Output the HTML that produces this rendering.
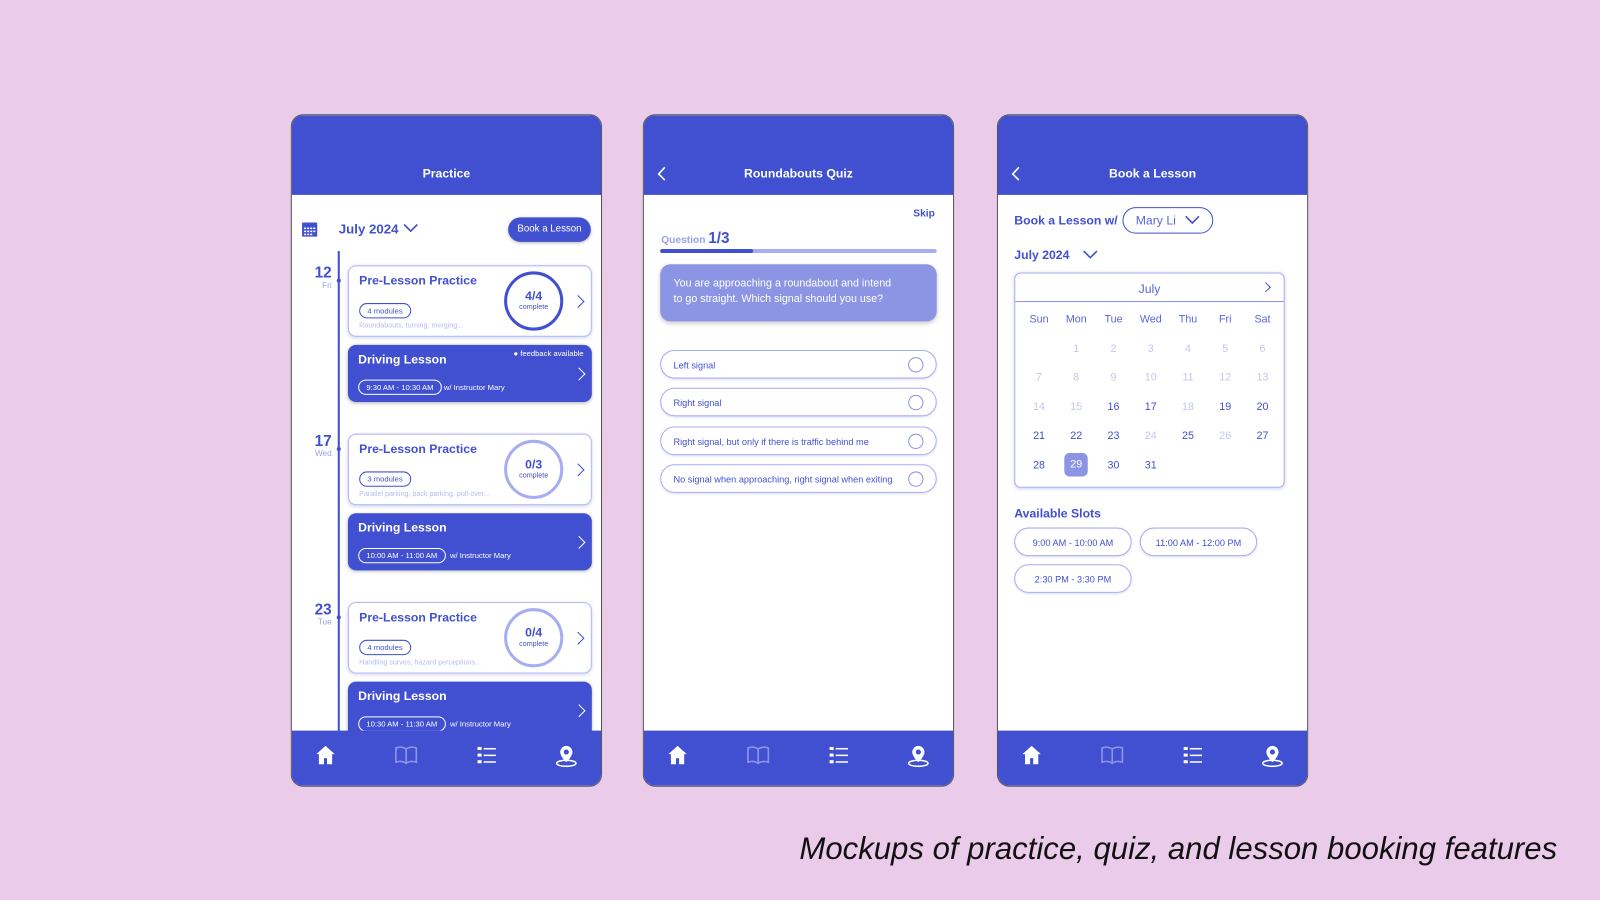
<!DOCTYPE html>
<html><head><meta charset="utf-8"><style>
*{margin:0;padding:0;box-sizing:border-box}
body{width:1600px;height:900px;background:#ebcbea;font-family:"Liberation Sans",sans-serif;overflow:hidden;color:#4150d0}
#w{position:absolute;left:0;top:0;width:1568px;height:882px;transform:scale(1.020408);transform-origin:0 0}
.ph{position:absolute;top:112px;width:305px;height:659px;background:#fff;border:1px solid #555;border-radius:12px;overflow:hidden}
.hd{position:absolute;left:0;top:0;width:100%;height:78px;background:#4150d0;color:#fff;font-weight:bold;font-size:12px;text-align:center;padding-top:50px}
.nav{position:absolute;left:0;bottom:0;width:100%;height:54px;background:#4150d0}
.nav svg{position:absolute;top:14px}
.a{position:absolute}
.card{position:absolute;left:55px;width:239px;border-radius:8px}
.pc{height:70px;border:1px solid #b5bbef;background:#fff;box-shadow:0 1px 3px rgba(65,80,208,.25)}
.dl{height:56px;background:#4150d0;color:#fff;box-shadow:0 1px 3px rgba(0,0,0,.25)}
.t{position:absolute;left:10px;top:7px;font-size:12px;font-weight:bold}
.pill{position:absolute;left:10px;border:1px solid;border-radius:8px;font-size:7.5px;padding:2px 7px;white-space:nowrap}
.sub{position:absolute;left:10px;top:55px;font-size:7px;color:#b5bbef;white-space:nowrap}
.circ{position:absolute;left:152px;top:5px;width:58px;height:58px;border-radius:50%;border:3px solid #4150d0;text-align:center;padding-top:16px;font-size:12px;font-weight:bold;line-height:11px}
.circ small{display:block;font-size:7px;font-weight:normal}
.chev{position:absolute;right:8px;width:9px;height:9px;border-right:1.6px solid;border-top:1.6px solid;transform:rotate(45deg)}
.date{position:absolute;left:6px;width:33px;text-align:right;font-size:15px;font-weight:bold;line-height:14px}
.date small{display:block;font-size:8px;font-weight:normal;color:#9aa0e6;line-height:10px}
.dot{position:absolute;left:44px;width:4px;height:4px;border-radius:50%;background:#4150d0}
.opt{position:absolute;left:16px;width:271px;height:28px;border:1px solid #a7aef0;border-radius:14px;font-size:9px;padding:9px 0 0 12px;box-shadow:0 1px 2px rgba(65,80,208,.2)}
.opt i{position:absolute;right:12px;top:6px;width:15px;height:15px;border:1px solid #8c95e3;border-radius:50%}
.cal td{width:36.5px;text-align:center;font-size:10.5px;height:28.5px}
.slot{position:absolute;width:115px;height:28px;border:1px solid #a7aef0;border-radius:14px;font-size:9px;text-align:center;padding-top:9px;box-shadow:0 1px 2px rgba(65,80,208,.2)}
</style></head><body><div id="w">

<!-- PHONE 1 -->
<div class="ph" style="left:285px">
<div class="hd">Practice</div>
<svg class="a" style="left:10px;top:105px" width="15" height="14" viewBox="0 0 15 14"><rect x="0" y="0" width="15" height="14" rx="1" fill="#4150d0"/><g fill="#fff"><rect x="2" y="5" width="2" height="1.5"/><rect x="5" y="5" width="2" height="1.5"/><rect x="8" y="5" width="2" height="1.5"/><rect x="11" y="5" width="2" height="1.5"/><rect x="2" y="8" width="2" height="1.5"/><rect x="5" y="8" width="2" height="1.5"/><rect x="8" y="8" width="2" height="1.5"/><rect x="11" y="8" width="2" height="1.5"/><rect x="2" y="11" width="2" height="1.5"/><rect x="5" y="11" width="2" height="1.5"/><rect x="8" y="11" width="2" height="1.5"/></g></svg>
<div class="a" style="left:46px;top:104px;font-size:13px;font-weight:bold">July 2024</div>
<svg class="a" style="left:109px;top:106px" width="15" height="9"><path d="M1 1l6.5 6.5L14 1" stroke="#4150d0" stroke-width="1.6" fill="none"/></svg>
<div class="a" style="left:212px;top:100px;width:81px;height:24px;background:#4150d0;color:#fff;border-radius:12px;font-size:9.5px;text-align:center;padding-top:6px;box-shadow:0 1px 3px rgba(0,0,0,.3)">Book a Lesson</div>
<div class="a" style="left:45px;top:133px;width:1.5px;height:480px;background:#4150d0"></div>

<div class="date" style="top:148px">12<small>Fri</small></div><div class="dot" style="top:160px"></div>
<div class="card pc" style="top:147px"><div class="t">Pre-Lesson Practice</div><div class="pill" style="top:36px">4 modules</div><div class="sub">Roundabouts, turning, merging...</div><div class="circ">4/4<small>complete</small></div><div class="chev" style="top:30px;color:#4150d0"></div></div>
<div class="card dl" style="top:225px"><div class="t">Driving Lesson</div><div class="a" style="right:8px;top:4px;font-size:7.5px">● feedback available</div><div class="pill" style="top:34px;border-color:#fff">9:30 AM - 10:30 AM</div><div class="a" style="left:94px;top:37px;font-size:7.5px">w/ Instructor Mary</div><div class="chev" style="top:24px"></div></div>

<div class="date" style="top:313px">17<small>Wed</small></div><div class="dot" style="top:325px"></div>
<div class="card pc" style="top:312px"><div class="t">Pre-Lesson Practice</div><div class="pill" style="top:36px">3 modules</div><div class="sub">Parallel parking, back parking, pull-over...</div><div class="circ" style="border-color:#a7aef0">0/3<small>complete</small></div><div class="chev" style="top:30px;color:#4150d0"></div></div>
<div class="card dl" style="top:390px"><div class="t">Driving Lesson</div><div class="pill" style="top:34px;border-color:#fff">10:00 AM - 11:00 AM</div><div class="a" style="left:100px;top:37px;font-size:7.5px">w/ Instructor Mary</div><div class="chev" style="top:24px"></div></div>

<div class="date" style="top:478px">23<small>Tue</small></div><div class="dot" style="top:490px"></div>
<div class="card pc" style="top:477px"><div class="t">Pre-Lesson Practice</div><div class="pill" style="top:36px">4 modules</div><div class="sub">Handling curves, hazard perceptions...</div><div class="circ" style="border-color:#a7aef0">0/4<small>complete</small></div><div class="chev" style="top:30px;color:#4150d0"></div></div>
<div class="card dl" style="top:555px"><div class="t">Driving Lesson</div><div class="pill" style="top:34px;border-color:#fff">10:30 AM - 11:30 AM</div><div class="a" style="left:100px;top:37px;font-size:7.5px">w/ Instructor Mary</div><div class="chev" style="top:24px"></div></div>
<div class="nav">
<svg style="left:23px" width="20" height="20" viewBox="0 0 20 20"><path d="M10 1L1 9h2.5v10h5v-6h3v6h5V9H19z" fill="#fff"/></svg>
<svg style="left:101px" width="22" height="20" viewBox="0 0 22 20"><path d="M11 4C8 2 4 2 1 3v14c3-1 7-1 10 1 3-2 7-2 10-1V3c-3-1-7-1-10 1zM11 4v14" stroke="#8c95e3" stroke-width="1.6" fill="none"/></svg>
<svg style="left:181px" width="20" height="20" viewBox="0 0 20 20"><g fill="#fff"><rect x="1" y="2" width="4" height="3"/><rect x="1" y="8.5" width="4" height="3"/><rect x="1" y="15" width="4" height="3"/><rect x="7" y="3" width="12" height="1.5"/><rect x="7" y="9.5" width="12" height="1.5"/><rect x="7" y="16" width="12" height="1.5"/></g></svg>
<svg style="left:258px" width="22" height="22" viewBox="0 0 22 22"><path d="M11 1a6 6 0 0 0-6 6c0 4.5 6 10 6 10s6-5.5 6-10a6 6 0 0 0-6-6zm0 3.5a2.5 2.5 0 1 1 0 5a2.5 2.5 0 1 1 0-5z" fill="#fff" fill-rule="evenodd"/><ellipse cx="11" cy="18" rx="9.5" ry="3" stroke="#fff" stroke-width="1.5" fill="none"/></svg>
</div>
</div>

<!-- PHONE 2 -->
<div class="ph" style="left:630px">
<div class="hd">Roundabouts Quiz</div>
<svg class="a" style="left:13px;top:50px" width="9" height="15"><path d="M7.5 1L1.5 7.5l6 6" stroke="#fff" stroke-width="1.6" fill="none"/></svg>
<div class="a" style="left:264px;top:91px;font-size:10px;font-weight:bold">Skip</div>
<div class="a" style="left:17px;top:112px;font-size:10px;font-weight:bold;color:#9aa0e6">Question <span style="font-size:15px;color:#4150d0">1/3</span></div>
<div class="a" style="left:16px;top:131px;width:271px;height:4px;border-radius:2px;background:#a7aef0"></div>
<div class="a" style="left:16px;top:131px;width:91px;height:4px;border-radius:2px;background:#4150d0"></div>
<div class="a" style="left:16px;top:146px;width:271px;height:56px;border-radius:10px;background:#8c95e3;color:#fff;font-size:10.5px;line-height:15px;padding:12px 38px 12px 13px;box-shadow:0 2px 4px rgba(0,0,0,.2)">You are approaching a roundabout and intend to go straight. Which signal should you use?</div>
<div class="opt" style="top:230px">Left signal<i></i></div>
<div class="opt" style="top:267px">Right signal<i></i></div>
<div class="opt" style="top:305px">Right signal, but only if there is traffic behind me<i></i></div>
<div class="opt" style="top:342px">No signal when approaching, right signal when exiting<i></i></div>
<div class="nav">
<svg style="left:23px" width="20" height="20" viewBox="0 0 20 20"><path d="M10 1L1 9h2.5v10h5v-6h3v6h5V9H19z" fill="#fff"/></svg>
<svg style="left:101px" width="22" height="20" viewBox="0 0 22 20"><path d="M11 4C8 2 4 2 1 3v14c3-1 7-1 10 1 3-2 7-2 10-1V3c-3-1-7-1-10 1zM11 4v14" stroke="#8c95e3" stroke-width="1.6" fill="none"/></svg>
<svg style="left:181px" width="20" height="20" viewBox="0 0 20 20"><g fill="#fff"><rect x="1" y="2" width="4" height="3"/><rect x="1" y="8.5" width="4" height="3"/><rect x="1" y="15" width="4" height="3"/><rect x="7" y="3" width="12" height="1.5"/><rect x="7" y="9.5" width="12" height="1.5"/><rect x="7" y="16" width="12" height="1.5"/></g></svg>
<svg style="left:258px" width="22" height="22" viewBox="0 0 22 22"><path d="M11 1a6 6 0 0 0-6 6c0 4.5 6 10 6 10s6-5.5 6-10a6 6 0 0 0-6-6zm0 3.5a2.5 2.5 0 1 1 0 5a2.5 2.5 0 1 1 0-5z" fill="#fff" fill-rule="evenodd"/><ellipse cx="11" cy="18" rx="9.5" ry="3" stroke="#fff" stroke-width="1.5" fill="none"/></svg>
</div>
</div>

<!-- PHONE 3 -->
<div class="ph" style="left:977px">
<div class="hd">Book a Lesson</div>
<svg class="a" style="left:13px;top:50px" width="9" height="15"><path d="M7.5 1L1.5 7.5l6 6" stroke="#fff" stroke-width="1.6" fill="none"/></svg>
<div class="a" style="left:16px;top:96px;font-size:12px;font-weight:bold">Book a Lesson w/</div>
<div class="a" style="left:122px;top:90px;width:89px;height:26px;border:1px solid #4150d0;border-radius:13px;font-size:12px;padding:5px 0 0 12px;color:#5a66d8">Mary Li</div>
<svg class="a" style="left:183px;top:98px" width="15" height="9"><path d="M1 1l6.5 6.5L14 1" stroke="#4150d0" stroke-width="1.6" fill="none"/></svg>
<div class="a" style="left:16px;top:130px;font-size:12px;font-weight:bold">July 2024</div>
<svg class="a" style="left:83px;top:132px" width="15" height="9"><path d="M1 1l6.5 6.5L14 1" stroke="#4150d0" stroke-width="1.6" fill="none"/></svg>
<div class="a" style="left:16px;top:154px;width:265px;height:211px;border:1px solid #a7aef0;border-radius:6px;box-shadow:0 1px 3px rgba(65,80,208,.25)">
 <div style="height:28px;border-bottom:1px solid #8c95e3;text-align:center;font-size:12px;padding-top:8px;color:#5a66d8">July</div>
 <div class="a" style="right:14px;top:10px;width:7px;height:7px;border-right:1.6px solid #4150d0;border-top:1.6px solid #4150d0;transform:rotate(45deg)"></div>
 <table class="cal" style="border-collapse:collapse;margin-left:5px;margin-top:3px;color:#4150d0">
 <tr style="color:#5a66d8"><td>Sun</td><td>Mon</td><td>Tue</td><td>Wed</td><td>Thu</td><td>Fri</td><td>Sat</td></tr>
 <tr style="color:#c3c7f0"><td></td><td>1</td><td>2</td><td>3</td><td>4</td><td>5</td><td>6</td></tr>
 <tr style="color:#c3c7f0"><td>7</td><td>8</td><td>9</td><td>10</td><td>11</td><td>12</td><td>13</td></tr>
 <tr><td style="color:#c3c7f0">14</td><td style="color:#c3c7f0">15</td><td>16</td><td>17</td><td style="color:#c3c7f0">18</td><td>19</td><td>20</td></tr>
 <tr><td>21</td><td>22</td><td>23</td><td style="color:#c3c7f0">24</td><td>25</td><td style="color:#c3c7f0">26</td><td>27</td></tr>
 <tr><td>28</td><td><span style="display:inline-block;width:23px;height:23px;border-radius:5px;background:#8c95e3;color:#fff;padding-top:5px">29</span></td><td>30</td><td>31</td><td></td><td></td><td></td></tr>
 </table>
</div>
<div class="a" style="left:16px;top:383px;font-size:12px;font-weight:bold">Available Slots</div>
<div class="slot" style="left:16px;top:404px">9:00 AM - 10:00 AM</div>
<div class="slot" style="left:139px;top:404px">11:00 AM - 12:00 PM</div>
<div class="slot" style="left:16px;top:440px">2:30 PM - 3:30 PM</div>
<div class="nav">
<svg style="left:23px" width="20" height="20" viewBox="0 0 20 20"><path d="M10 1L1 9h2.5v10h5v-6h3v6h5V9H19z" fill="#fff"/></svg>
<svg style="left:101px" width="22" height="20" viewBox="0 0 22 20"><path d="M11 4C8 2 4 2 1 3v14c3-1 7-1 10 1 3-2 7-2 10-1V3c-3-1-7-1-10 1zM11 4v14" stroke="#8c95e3" stroke-width="1.6" fill="none"/></svg>
<svg style="left:181px" width="20" height="20" viewBox="0 0 20 20"><g fill="#fff"><rect x="1" y="2" width="4" height="3"/><rect x="1" y="8.5" width="4" height="3"/><rect x="1" y="15" width="4" height="3"/><rect x="7" y="3" width="12" height="1.5"/><rect x="7" y="9.5" width="12" height="1.5"/><rect x="7" y="16" width="12" height="1.5"/></g></svg>
<svg style="left:258px" width="22" height="22" viewBox="0 0 22 22"><path d="M11 1a6 6 0 0 0-6 6c0 4.5 6 10 6 10s6-5.5 6-10a6 6 0 0 0-6-6zm0 3.5a2.5 2.5 0 1 1 0 5a2.5 2.5 0 1 1 0-5z" fill="#fff" fill-rule="evenodd"/><ellipse cx="11" cy="18" rx="9.5" ry="3" stroke="#fff" stroke-width="1.5" fill="none"/></svg>
</div>
</div>

<div class="a" style="right:42px;top:815px;font-size:30.5px;font-style:italic;color:#111;white-space:nowrap">Mockups of practice, quiz, and lesson booking features</div>
</div></body></html>
